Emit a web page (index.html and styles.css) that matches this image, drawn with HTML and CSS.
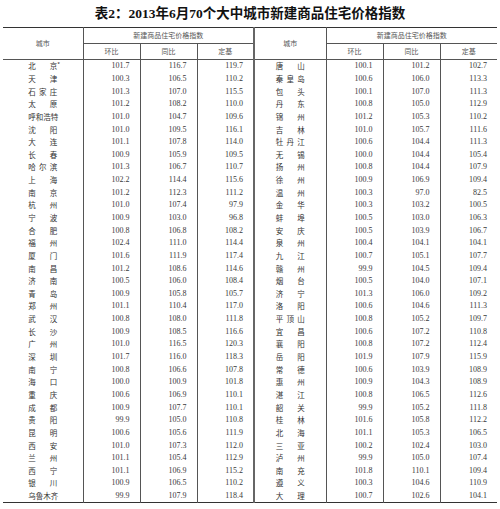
FILE: index.html
```html
<!DOCTYPE html>
<html lang="zh">
<head>
<meta charset="utf-8">
<title>表2</title>
<link rel="stylesheet" href="styles.css">
</head>
<body>
<h1 class="title">表2：2013年6月70个大中城市新建商品住宅价格指数</h1>
<table class="grid">
<colgroup>
<col class="c-city"><col class="c-num"><col class="c-num"><col class="c-num">
<col class="c-city2"><col class="c-num"><col class="c-num"><col class="c-num">
</colgroup>
<thead>
<tr class="h1row">
<th rowspan="2" class="hcity">城市</th>
<th colspan="3" class="hgroup">新建商品住宅价格指数</th>
<th rowspan="2" class="hcity mid">城市</th>
<th colspan="3" class="hgroup">新建商品住宅价格指数</th>
</tr>
<tr class="h2row">
<th>环比</th><th>同比</th><th>定基</th>
<th>环比</th><th>同比</th><th>定基</th>
</tr>
</thead>
<tbody>
<tr><td class="city"><span class="nm">北京<span class="star">*</span></span></td><td>101.7</td><td>116.7</td><td>119.7</td><td class="city mid"><span class="nm">唐山</span></td><td>100.1</td><td>101.2</td><td>102.7</td></tr>
<tr><td class="city"><span class="nm">天津</span></td><td>100.3</td><td>106.5</td><td>110.2</td><td class="city mid"><span class="nm">秦皇岛</span></td><td>100.6</td><td>106.0</td><td>113.3</td></tr>
<tr><td class="city"><span class="nm">石家庄</span></td><td>101.3</td><td>107.0</td><td>115.5</td><td class="city mid"><span class="nm">包头</span></td><td>100.1</td><td>107.0</td><td>111.3</td></tr>
<tr><td class="city"><span class="nm">太原</span></td><td>101.2</td><td>108.2</td><td>110.0</td><td class="city mid"><span class="nm">丹东</span></td><td>100.8</td><td>105.0</td><td>112.9</td></tr>
<tr><td class="city"><span class="nm">呼和浩特</span></td><td>101.0</td><td>104.7</td><td>109.6</td><td class="city mid"><span class="nm">锦州</span></td><td>101.2</td><td>105.3</td><td>110.2</td></tr>
<tr><td class="city"><span class="nm">沈阳</span></td><td>101.0</td><td>109.5</td><td>116.1</td><td class="city mid"><span class="nm">吉林</span></td><td>101.0</td><td>105.7</td><td>111.6</td></tr>
<tr><td class="city"><span class="nm">大连</span></td><td>101.1</td><td>107.8</td><td>114.0</td><td class="city mid"><span class="nm">牡丹江</span></td><td>100.6</td><td>104.4</td><td>111.3</td></tr>
<tr><td class="city"><span class="nm">长春</span></td><td>100.9</td><td>105.9</td><td>109.5</td><td class="city mid"><span class="nm">无锡</span></td><td>100.0</td><td>104.4</td><td>105.4</td></tr>
<tr><td class="city"><span class="nm">哈尔滨</span></td><td>101.3</td><td>106.7</td><td>110.7</td><td class="city mid"><span class="nm">扬州</span></td><td>100.8</td><td>104.4</td><td>107.9</td></tr>
<tr><td class="city"><span class="nm">上海</span></td><td>102.2</td><td>114.4</td><td>115.6</td><td class="city mid"><span class="nm">徐州</span></td><td>100.9</td><td>106.9</td><td>109.4</td></tr>
<tr><td class="city"><span class="nm">南京</span></td><td>101.2</td><td>112.3</td><td>111.2</td><td class="city mid"><span class="nm">温州</span></td><td>100.3</td><td>97.0</td><td>82.5</td></tr>
<tr><td class="city"><span class="nm">杭州</span></td><td>101.0</td><td>107.4</td><td>97.9</td><td class="city mid"><span class="nm">金华</span></td><td>100.3</td><td>103.2</td><td>100.5</td></tr>
<tr><td class="city"><span class="nm">宁波</span></td><td>100.9</td><td>103.0</td><td>96.8</td><td class="city mid"><span class="nm">蚌埠</span></td><td>100.5</td><td>103.0</td><td>106.3</td></tr>
<tr><td class="city"><span class="nm">合肥</span></td><td>100.8</td><td>106.8</td><td>108.2</td><td class="city mid"><span class="nm">安庆</span></td><td>100.5</td><td>103.9</td><td>106.7</td></tr>
<tr><td class="city"><span class="nm">福州</span></td><td>102.4</td><td>111.0</td><td>114.4</td><td class="city mid"><span class="nm">泉州</span></td><td>100.4</td><td>104.1</td><td>104.1</td></tr>
<tr><td class="city"><span class="nm">厦门</span></td><td>101.6</td><td>111.9</td><td>117.4</td><td class="city mid"><span class="nm">九江</span></td><td>100.7</td><td>105.1</td><td>107.7</td></tr>
<tr><td class="city"><span class="nm">南昌</span></td><td>101.2</td><td>108.6</td><td>114.6</td><td class="city mid"><span class="nm">赣州</span></td><td>99.9</td><td>104.5</td><td>109.4</td></tr>
<tr><td class="city"><span class="nm">济南</span></td><td>100.5</td><td>106.0</td><td>108.4</td><td class="city mid"><span class="nm">烟台</span></td><td>100.5</td><td>104.0</td><td>107.1</td></tr>
<tr><td class="city"><span class="nm">青岛</span></td><td>100.9</td><td>105.8</td><td>105.7</td><td class="city mid"><span class="nm">济宁</span></td><td>101.3</td><td>106.0</td><td>109.2</td></tr>
<tr><td class="city"><span class="nm">郑州</span></td><td>101.1</td><td>110.4</td><td>117.0</td><td class="city mid"><span class="nm">洛阳</span></td><td>100.6</td><td>104.6</td><td>111.3</td></tr>
<tr><td class="city"><span class="nm">武汉</span></td><td>100.8</td><td>108.0</td><td>111.8</td><td class="city mid"><span class="nm">平顶山</span></td><td>100.8</td><td>105.2</td><td>109.7</td></tr>
<tr><td class="city"><span class="nm">长沙</span></td><td>100.9</td><td>108.5</td><td>116.6</td><td class="city mid"><span class="nm">宜昌</span></td><td>100.6</td><td>107.2</td><td>110.8</td></tr>
<tr><td class="city"><span class="nm">广州</span></td><td>101.0</td><td>116.5</td><td>120.3</td><td class="city mid"><span class="nm">襄阳</span></td><td>100.8</td><td>107.2</td><td>112.4</td></tr>
<tr><td class="city"><span class="nm">深圳</span></td><td>101.7</td><td>116.0</td><td>118.3</td><td class="city mid"><span class="nm">岳阳</span></td><td>101.9</td><td>107.9</td><td>115.9</td></tr>
<tr><td class="city"><span class="nm">南宁</span></td><td>100.8</td><td>106.6</td><td>107.8</td><td class="city mid"><span class="nm">常德</span></td><td>100.6</td><td>103.9</td><td>108.9</td></tr>
<tr><td class="city"><span class="nm">海口</span></td><td>100.0</td><td>100.9</td><td>101.8</td><td class="city mid"><span class="nm">惠州</span></td><td>100.9</td><td>104.3</td><td>108.9</td></tr>
<tr><td class="city"><span class="nm">重庆</span></td><td>100.6</td><td>106.9</td><td>110.1</td><td class="city mid"><span class="nm">湛江</span></td><td>100.8</td><td>106.5</td><td>112.6</td></tr>
<tr><td class="city"><span class="nm">成都</span></td><td>100.9</td><td>107.7</td><td>110.1</td><td class="city mid"><span class="nm">韶关</span></td><td>99.9</td><td>105.2</td><td>111.8</td></tr>
<tr><td class="city"><span class="nm">贵阳</span></td><td>99.9</td><td>105.0</td><td>110.8</td><td class="city mid"><span class="nm">桂林</span></td><td>101.6</td><td>105.8</td><td>112.2</td></tr>
<tr><td class="city"><span class="nm">昆明</span></td><td>100.6</td><td>105.6</td><td>111.9</td><td class="city mid"><span class="nm">北海</span></td><td>101.1</td><td>105.3</td><td>106.5</td></tr>
<tr><td class="city"><span class="nm">西安</span></td><td>101.0</td><td>107.3</td><td>112.0</td><td class="city mid"><span class="nm">三亚</span></td><td>100.2</td><td>102.4</td><td>103.0</td></tr>
<tr><td class="city"><span class="nm">兰州</span></td><td>101.1</td><td>105.4</td><td>112.9</td><td class="city mid"><span class="nm">泸州</span></td><td>99.9</td><td>105.0</td><td>107.4</td></tr>
<tr><td class="city"><span class="nm">西宁</span></td><td>101.1</td><td>106.9</td><td>115.2</td><td class="city mid"><span class="nm">南充</span></td><td>101.8</td><td>110.1</td><td>109.4</td></tr>
<tr><td class="city"><span class="nm">银川</span></td><td>100.9</td><td>106.5</td><td>110.2</td><td class="city mid"><span class="nm">遵义</span></td><td>100.3</td><td>104.6</td><td>110.9</td></tr>
<tr><td class="city"><span class="nm">乌鲁木齐</span></td><td>99.9</td><td>107.9</td><td>118.4</td><td class="city mid"><span class="nm">大理</span></td><td>100.7</td><td>102.6</td><td>104.1</td></tr>
</tbody>
</table>
</body>
</html>
```

FILE: styles.css
```css
html, body {
  margin: 0;
  padding: 0;
  background: #ffffff;
}

.title {
  margin: 0;
  height: 27px;
  line-height: 27px;
  text-align: center;
  font-family: "Liberation Serif", "Noto Sans CJK SC", serif;
  font-weight: bold;
  font-size: 13.5px;
  color: #111;
}

.grid {
  margin-left: 3px;
  width: 492px;
  table-layout: fixed;
  border-collapse: collapse;
  border-top: 1px solid #333;
  border-bottom: 1px solid #333;
  color: #3a3a3a;
}

.c-city { width: 80px; }
.c-city2 { width: 72px; }
.c-num { width: 57px; }

.grid th {
  font-family: "Noto Sans CJK SC", sans-serif;
  font-weight: normal;
  font-size: 7px;
  color: #555;
  padding: 0;
  height: 15px;
  line-height: 15px;
  border-left: 1px solid #555;
  border-bottom: 1px solid #555;
  text-align: center;
}

.grid th.hcity {
  border-left: none;
  height: 31px;
}

.grid th.hcity.mid {
  border-left: 2px solid #666;
}

.grid td {
  padding: 0 10px 0 0;
  height: 12.65px;
  line-height: 10px;
  font-family: "Liberation Serif", serif;
  font-size: 8px;
  text-align: right;
  border-left: 1px solid #555;
  white-space: nowrap;
}

.grid td.city {
  padding: 0;
  text-align: center;
  border-left: none;
  font-family: "Noto Sans CJK SC", sans-serif;
  font-size: 7.5px;
  color: #333;
}

.grid td.city.mid {
  border-left: 2px solid #666;
}

.nm {
  position: relative;
  display: block;
  width: 29px;
  height: 10px;
  margin: 0 auto;
  text-align: justify;
  text-align-last: justify;
  line-height: 10px;
}

.star {
  position: absolute;
  left: 100%;
  top: -1px;
  font-size: 6px;
  line-height: 10px;
}
```
